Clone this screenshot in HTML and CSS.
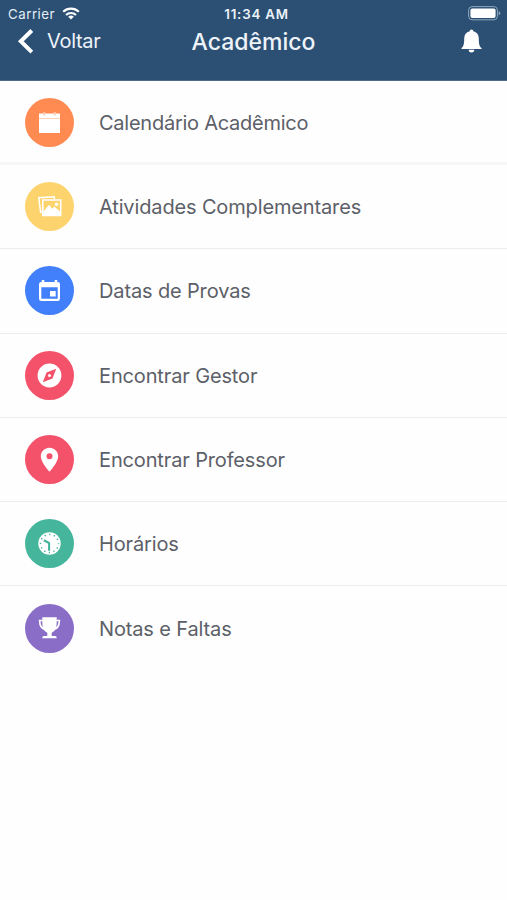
FILE: index.html
```html
<!DOCTYPE html>
<html lang="pt-BR">
<head>
<meta charset="utf-8">
<meta name="viewport" content="width=device-width">
<title>Acadêmico</title>
<link rel="stylesheet" href="styles.css">
</head>
<body>
<header class="header">
  <div class="status">
    <div class="carrier"><span>Carrier</span>
      <svg width="18" height="13" viewBox="0 0 18 13" fill="none" stroke="#fff" stroke-width="2.2"><path d="M1.2 4.8a11.2 11.2 0 0 1 15.6 0M4 8a7.2 7.2 0 0 1 10 0"/><path d="M9 12.5 6.2 9.8a4 4 0 0 1 5.6 0z" fill="#fff" stroke="none"/></svg>
    </div>
    <span class="time">11:34 AM</span>
    <svg class="battery" width="33" height="15" viewBox="0 0 33 15"><rect x=".6" y=".6" width="28.8" height="13.2" rx="3.5" fill="none" stroke="#8fa5bb"/><rect x="2.4" y="2.4" width="25.2" height="9.6" rx="2" fill="#fff"/><path d="M30.7 5v4.4q1.6-.7 1.6-2.2T30.7 5z" fill="#8fa5bb"/></svg>
  </div>
  <nav class="nav">
    <a class="back"><svg width="18" height="27" viewBox="0 0 18 27"><path d="M14.8 2.500 3.800 13.300l11 10.800" fill="none" stroke="#fff" stroke-width="4"/></svg><span>Voltar</span></a>
    <h1 class="title">Acadêmico</h1>
    <svg class="bell" width="21" height="24" viewBox="0 0 21 24" fill="#fff"><path d="M10.500.5c1 0 1.700.7 1.800 1.800 3.600.8 5.500 3.600 5.500 7.200 0 5.500.6 8 2.700 9.600v.9H.5v-.9c2.100-1.600 2.700-4.100 2.700-9.600 0-3.600 1.900-6.400 5.500-7.200C8.800 1.200 9.500.5 10.500.5zM7.700 20.800h5.600a2.800 2.700 0 0 1-5.600 0z"/></svg>
  </nav>
</header>
<main class="list">
  <a class="row"><svg class="icon orange" viewBox="0 0 49 49"><path d="M14 15.600h4.200v-1h2v1h8.600v-1h2v1H35V20H14z" fill="#fff"/><path d="M14 21h21v14H14z" fill="#fff"/><path d="M14 20h21v1H14z" fill="#ffd1b6"/><path d="M19.200 15v2.300M29.800 15v2.300" stroke="#ffa77b" stroke-width="1.200"/></svg><span>Calendário Acadêmico</span></a>
  <a class="row"><svg class="icon yellow" viewBox="0 0 49 49"><path d="M17 30.300h-1.400L13.800 15.800l15.500-1 .2 2.200" fill="none" stroke="#fff" stroke-width="1.500"/><path fill="#fff" fill-rule="evenodd" d="M17 17.200h19.500v17H17zm1.600 1.600v10.700l5.400-6.700 3.200 4 2.200-2.200 5.500 5V18.800z"/><circle cx="31.600" cy="22.300" r="1.800" fill="#fff"/></svg><span>Atividades Complementares</span></a>
  <a class="row"><svg class="icon blue" viewBox="0 0 49 49"><path fill="#fff" fill-rule="evenodd" d="M16.800 14h2.500v2h10.400v-2h2.500v2h.5q2.300 0 2.300 2.300v14.200q0 2.500-2.300 2.500H16.300Q14 35 14 32.500V18.300Q14 16 16.300 16h.5zM16.300 21.200v11.500h16.400V21.200zM25 25h5.700v5.600H25z"/></svg><span>Datas de Provas</span></a>
  <a class="row"><svg class="icon red" viewBox="0 0 49 49"><circle cx="24.500" cy="24.500" r="11.900" fill="#fff"/><path class="cut-red" d="m31.200 17.800-3.700 9.700-9.700 3.700 3.700-9.700z"/><circle cx="24.500" cy="24.500" r="1.500" fill="#fff"/></svg><span>Encontrar Gestor</span></a>
  <a class="row"><svg class="icon red" viewBox="0 0 49 49"><path fill="#fff" fill-rule="evenodd" d="M24.500 12.700c-4.800 0-8.700 3.700-8.700 8.500 0 6.200 8.700 15.500 8.700 15.500s8.700-9.300 8.700-15.500c0-4.800-3.900-8.500-8.700-8.500zm0 5.500a3 3 0 1 1 0 6 3 3 0 0 1 0-6z"/></svg><span>Encontrar Professor</span></a>
  <a class="row"><svg class="icon green" viewBox="0 0 49 49"><circle cx="24.500" cy="24.500" r="11.200" fill="#fff"/><circle cx="24.500" cy="24.500" r="9" fill="none" stroke="#45b69c" stroke-width="1.500" stroke-dasharray="1.300 3.412" stroke-dashoffset=".65"/><path d="M18.800 21.300 24.100 24v7.800" fill="none" stroke="#45b69c" stroke-width="2.100" stroke-linejoin="round"/></svg><span>Horários</span></a>
  <a class="row"><svg class="icon purple" viewBox="0 0 49 49"><path d="M17.300 13.300h14.400v4.500c0 6-1.500 9.500-5 11v3.200h3.200c1.300 0 1.800.8 1.800 2.300H17.300c0-1.500.5-2.300 1.800-2.300h3.200v-3.200c-3.500-1.500-5-5-5-11z" fill="#fff"/><path d="M18 16.500h-3.400c.1 5.200 2.500 8.700 6.600 9.200M31 16.500h3.400c-.1 5.200-2.500 8.700-6.600 9.200" fill="none" stroke="#fff" stroke-width="1.700"/></svg><span>Notas e Faltas</span></a>
</main>
</body>
</html>
```

FILE: styles.css
```css
* { box-sizing: border-box; }
body {
  margin: 0;
  min-height: 900px;
  background: #fefefe;
  font-family: Inter, "Liberation Sans", sans-serif;
  color: #5c6068;
}
svg { display: block; flex: none; }
.header {
  height: 81px;
  background: #2c5074;
  border-bottom: 1px solid #4d6a89;
  color: #fff;
}
.status {
  display: grid;
  grid-template-columns: 1fr auto 1fr;
  align-items: center;
  height: 27px;
  padding: 0 6px;
  font-size: 13.3px;
}
.carrier { display: flex; align-items: center; gap: 7px; padding-left: 2px; color: #e4edf5; letter-spacing: .5px; }
.time { padding-left: 6px; font-weight: 600; letter-spacing: .8px; color: #edf3f9; }
.battery { justify-self: end; }
.nav {
  display: grid;
  grid-template-columns: 1fr auto 1fr;
  align-items: center;
  height: 28px;
  padding: 0 25px;
}
.back { display: flex; align-items: center; gap: 12px; height: 27px; margin-left: -8px; font-size: 20px; letter-spacing: -.3px; color: #edf3f9; }
.back span { padding-bottom: 2px; }
.title { margin: 0; padding-top: 1px; font-size: 23px; font-weight: 500; line-height: 28px; color: #edf3f9; }
.bell { justify-self: end; margin-bottom: 1px; }
.row {
  display: flex;
  align-items: center;
  gap: 25px;
  height: 84.3px;
  padding-left: 25px;
  border-bottom: 1px solid #ededee;
  font-size: 20px;
  line-height: 25px;
  letter-spacing: -.14px;
}
.row span { padding-top: 2px; }
.row:first-child {
  height: 84px;
  border-bottom: 3px solid #f7f7f8;
  padding-top: 1px;
  letter-spacing: -.25px;
}
.row:last-child { border-bottom: 0; }
.icon { width: 49px; height: 49px; border-radius: 50%; }
.orange { background: #ff8b53; }
.yellow { background: #fdd36d; }
.blue { background: #4180fa; }
.red { background: #f4526b; }
.cut-red { fill: #f4526b; }
.green { background: #45b69c; }
.purple { background: #8a6dc7; }
```
